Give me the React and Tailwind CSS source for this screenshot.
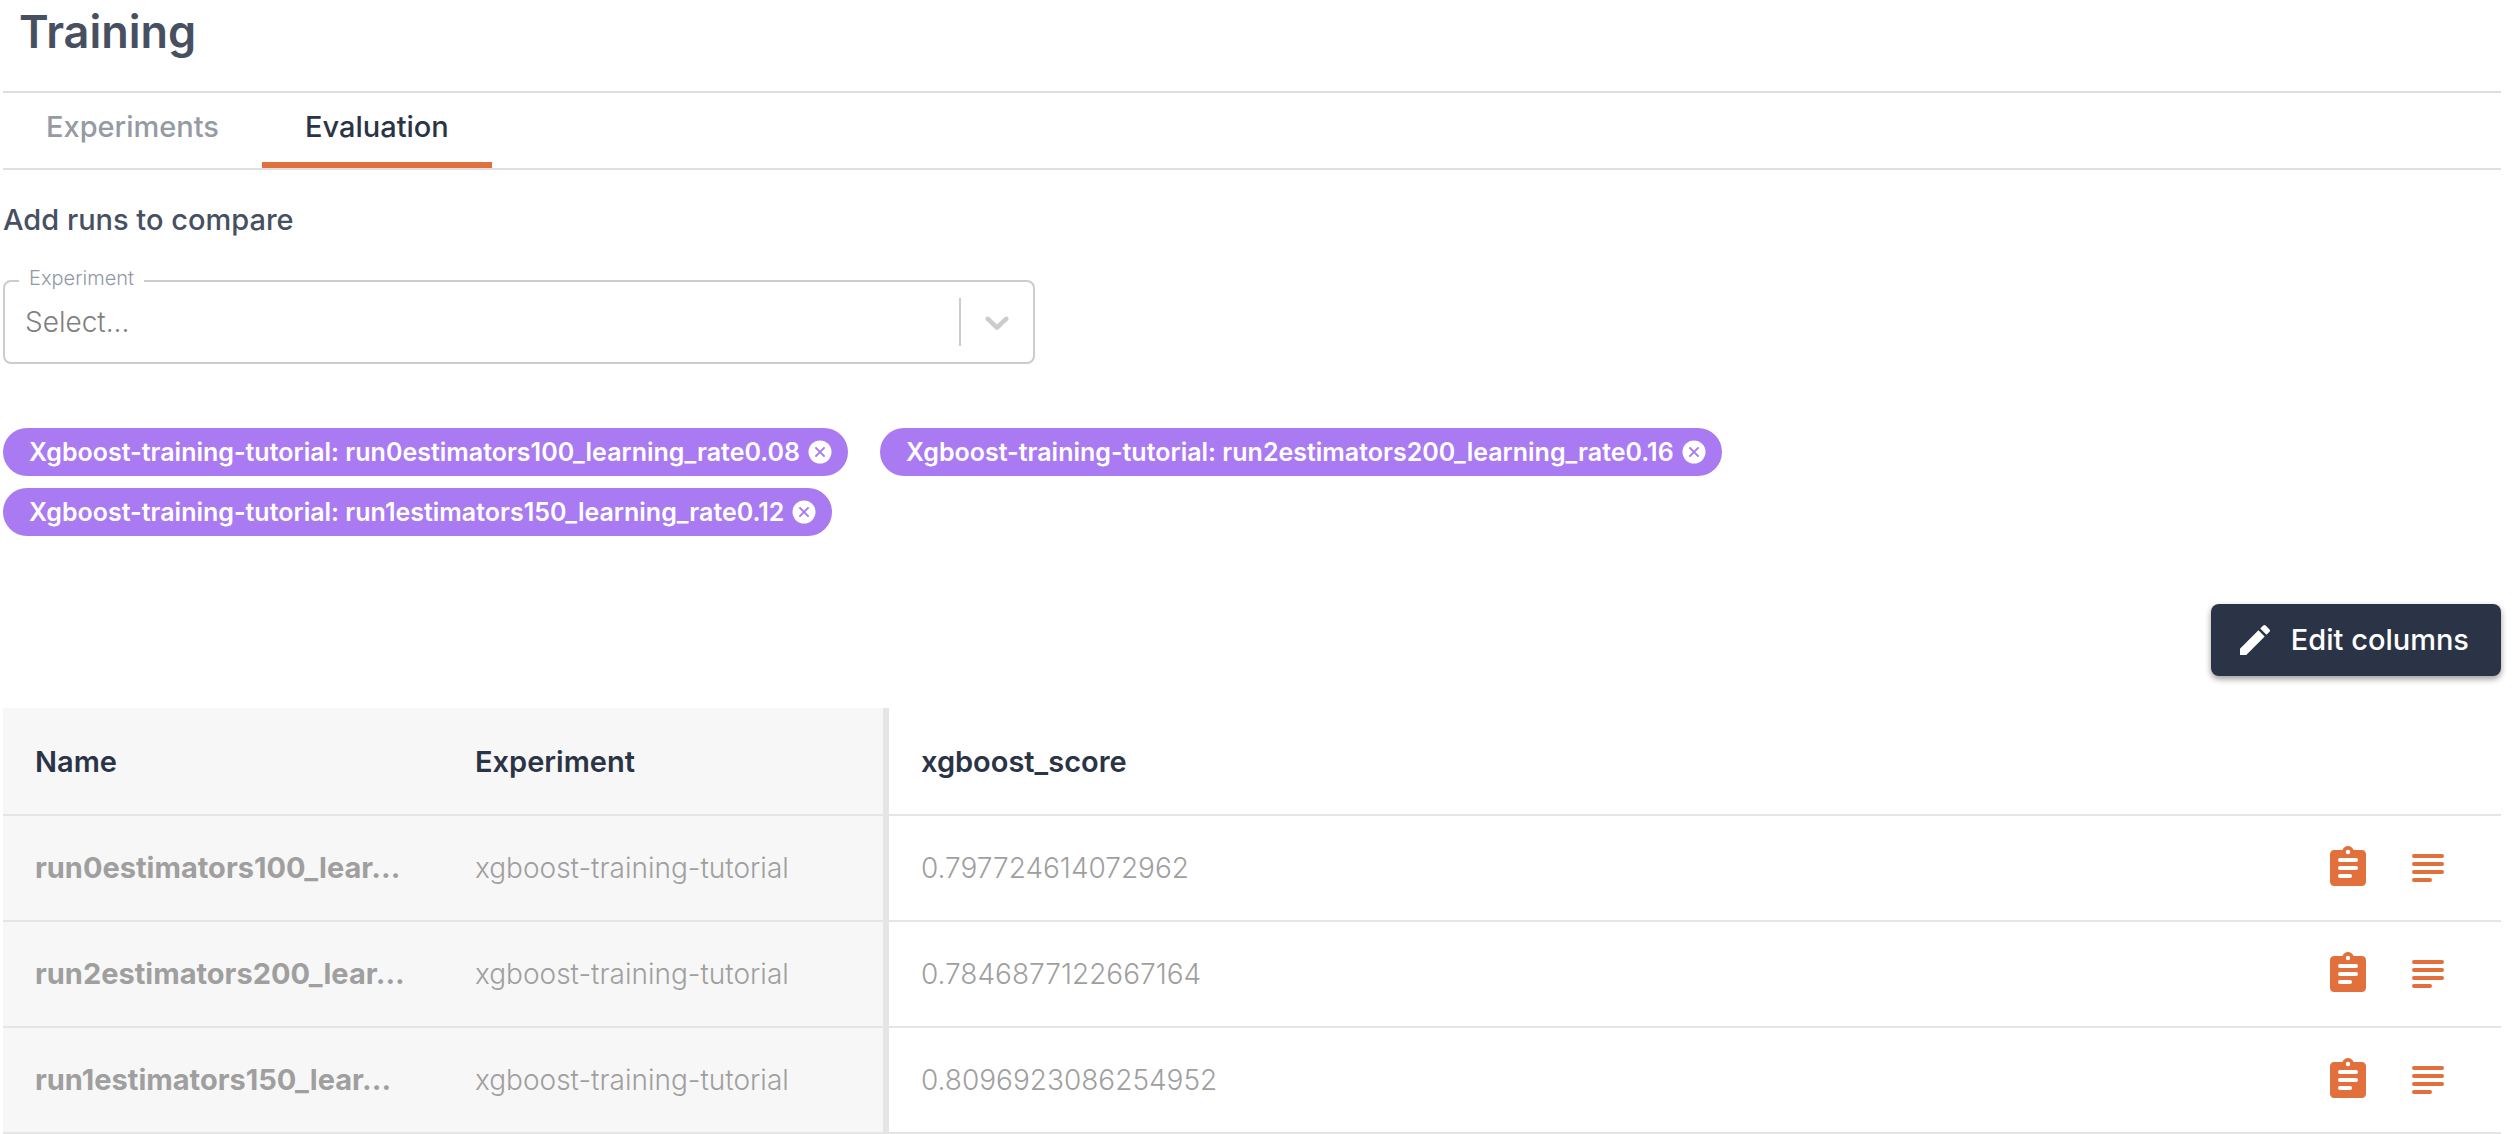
import { useState } from 'react'
import { MdEdit } from 'react-icons/md'

const TABS = ['Experiments', 'Evaluation']

const RUNS = [
  { name: 'run0estimators100_learning_rate0.08', experiment: 'xgboost-training-tutorial', score: '0.797724614072962' },
  { name: 'run2estimators200_learning_rate0.16', experiment: 'xgboost-training-tutorial', score: '0.7846877122667164' },
  { name: 'run1estimators150_learning_rate0.12', experiment: 'xgboost-training-tutorial', score: '0.8096923086254952' },
]

const NAME_LIMIT = 22

function shorten(name) {
  return name.length > NAME_LIMIT ? `${name.slice(0, NAME_LIMIT)}...` : name
}

function ChevronIcon() {
  return (
    <svg viewBox="0 0 20 20" className="h-10 w-10" fill="#cccccc" aria-hidden="true">
      <path d="M4.516 7.548c0.436-0.446 1.043-0.481 1.576 0l3.908 3.747 3.908-3.747c0.533-0.481 1.141-0.446 1.574 0 0.436 0.445 0.408 1.197 0 1.615-0.406 0.418-4.695 4.502-4.695 4.502-0.217 0.223-0.502 0.335-0.787 0.335s-0.57-0.112-0.789-0.335c0 0-4.287-4.084-4.695-4.502s-0.436-1.17 0-1.615z" />
    </svg>
  )
}

function RemoveIcon() {
  return (
    <svg viewBox="0 0 24 24" className="h-6 w-6" aria-hidden="true">
      <circle cx="12" cy="12" r="11.5" fill="#ffffff" />
      <path d="M7.4 7.4l9.2 9.2M16.6 7.4l-9.2 9.2" stroke="#a97af2" strokeWidth="2" />
    </svg>
  )
}

function ClipboardIcon() {
  return (
    <svg viewBox="0 0 24 24" className="h-12 w-12" fill="currentColor" fillRule="evenodd" aria-hidden="true">
      <path d="M19 3h-4.18C14.4 1.84 13.3 1 12 1s-2.4.84-2.82 2H5c-1.1 0-2 .9-2 2v14c0 1.1.9 2 2 2h14c1.1 0 2-.9 2-2V5c0-1.1-.9-2-2-2zM12 2.9a1.1 1.1 0 1 1 0 2.2 1.1 1.1 0 0 1 0-2.2zM8 7h8a1 1 0 0 1 0 2H8a1 1 0 0 1 0-2zM8 11h8a1 1 0 0 1 0 2H8a1 1 0 0 1 0-2zM8 15h5a1 1 0 0 1 0 2H8a1 1 0 0 1 0-2z" />
    </svg>
  )
}

function LinesIcon() {
  return (
    <svg viewBox="0 0 24 24" className="h-12 w-12" stroke="currentColor" strokeWidth="2" strokeLinecap="round" aria-hidden="true">
      <path d="M5 6h14M5 10h14M5 14h14M5 18h8" />
    </svg>
  )
}

function RunChip({ run, onRemove }) {
  return (
    <div className="flex h-12 items-center gap-2 rounded-full bg-[#a97af2] pr-4 pl-[26px] text-[25px] font-semibold text-white">
      <span className="pt-[2px]">Xgboost-training-tutorial: {run.name}</span>
      <button type="button" aria-label={`Remove ${run.name}`} onClick={onRemove}>
        <RemoveIcon />
      </button>
    </div>
  )
}

function RunsTable({ runs }) {
  return (
    <table className="w-full table-fixed border-separate border-spacing-0 text-left text-[28px] leading-10">
      <colgroup>
        <col className="w-[440px]" />
        <col className="w-[446px]" />
        <col />
        <col className="w-[208px]" />
      </colgroup>
      <thead className="text-[29px] text-[#2a3446]">
        <tr className="h-[108px]">
          <th className="border-b-2 border-[#e5e5e5] bg-[#f7f7f7] px-8 pt-[2px] font-semibold">Name</th>
          <th className="border-r-6 border-b-2 border-[#e5e5e5] bg-[#f7f7f7] px-8 pt-[2px] font-semibold">Experiment</th>
          <th className="border-b-2 border-[#e5e5e5] px-8 pt-[2px] font-semibold">xgboost_score</th>
          <td className="border-b-2 border-[#e5e5e5]" />
        </tr>
      </thead>
      <tbody className="text-[#9f9f9f]">
        {runs.map((run) => (
          <tr key={run.name} className="h-[106px]">
            <td className="border-b-2 border-[#e5e5e5] bg-[#f7f7f7] px-8 text-[29px] font-bold whitespace-nowrap">
              {shorten(run.name)}
            </td>
            <td className="border-r-6 border-b-2 border-[#e5e5e5] bg-[#f7f7f7] px-8 font-light">{run.experiment}</td>
            <td className="border-b-2 border-[#e5e5e5] px-8 font-light">{run.score}</td>
            <td className="border-b-2 border-[#e5e5e5] p-0">
              <div className="flex justify-end gap-8 pr-[49px] text-[#e2703c]">
                <button type="button" aria-label="Show details">
                  <ClipboardIcon />
                </button>
                <button type="button" aria-label="Show logs">
                  <LinesIcon />
                </button>
              </div>
            </td>
          </tr>
        ))}
      </tbody>
    </table>
  )
}

export default function App() {
  const [tab, setTab] = useState('Evaluation')
  const [runs, setRuns] = useState(RUNS)

  return (
    <main className="bg-white pr-[11px] pl-[3px] font-[Inter,sans-serif]">
      <h1 className="h-[91px] pl-4 text-[45px] leading-16 font-semibold text-[#475061]">Training</h1>

      {/* Tabs */}
      <div className="flex border-y-2 border-[#dedfe0]" role="tablist">
        {TABS.map((name) => (
          <button
            key={name}
            type="button"
            role="tab"
            aria-selected={tab === name}
            onClick={() => setTab(name)}
            className={`h-[75px] border-b-6 px-[43px] pb-[2px] text-[29px] leading-9 font-medium ${
              tab === name ? 'border-[#e2703c] text-[#2a3446]' : 'border-transparent text-[#959aa3]'
            }`}
          >
            {name}
          </button>
        ))}
      </div>

      <h2 className="mt-[30px] text-[29px] leading-10 font-medium text-[#475061]">Add runs to compare</h2>

      {/* Experiment picker */}
      <div className="relative mt-10 h-[84px] w-[1032px] max-w-full">
        <label htmlFor="experiment" className="absolute -top-4 left-4 bg-white px-[10px] text-xl font-light text-[#9298a6]">
          Experiment
        </label>
        <select
          id="experiment"
          className="h-full w-full appearance-none rounded-lg border-2 border-[#cccccc] bg-white px-5 text-[28px] font-light text-[#808080]"
        >
          <option>Select...</option>
        </select>
        <div className="pointer-events-none absolute inset-y-0 right-0 flex items-center gap-4 pr-[18px]">
          <span className="h-12 w-[2px] bg-[#cccccc]" />
          <ChevronIcon />
        </div>
      </div>

      <div className="mt-16 flex w-[1800px] max-w-full flex-wrap gap-x-8 gap-y-3">
        {runs.map((run) => (
          <RunChip key={run.name} run={run} onRemove={() => setRuns(runs.filter((r) => r !== run))} />
        ))}
      </div>

      <div className="mt-[68px] mb-8 flex justify-end">
        <button
          type="button"
          className="flex h-[72px] items-center gap-4 rounded-lg bg-[#2a3446] pr-8 pl-6 text-[29px] font-medium text-white shadow-[0_3px_6px_rgba(0,0,0,0.4)]"
        >
          <MdEdit className="h-10 w-10" />
          Edit columns
        </button>
      </div>

      <RunsTable runs={runs} />
    </main>
  )
}
